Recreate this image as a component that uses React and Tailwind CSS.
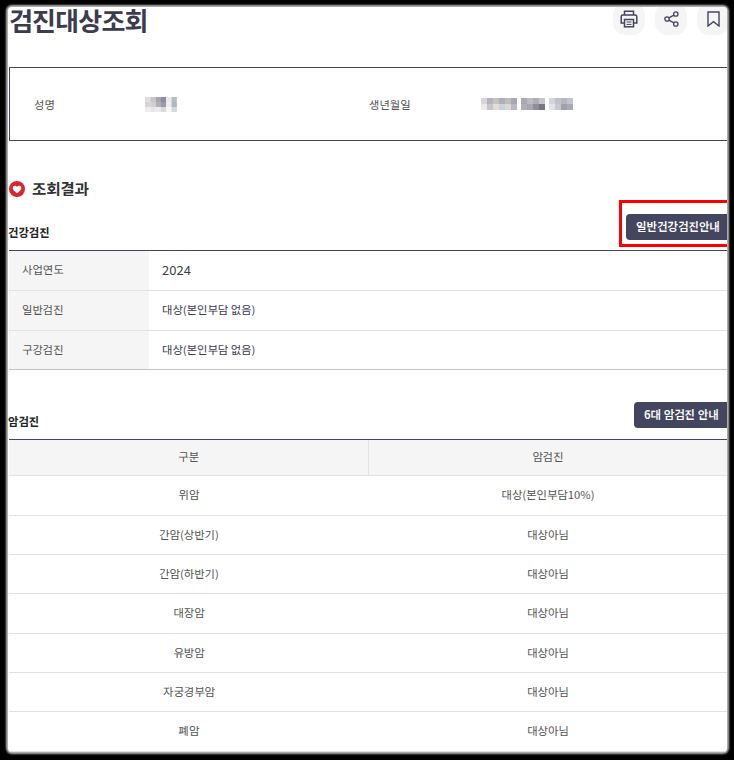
import React from 'react';

const FONT = "font-['Noto_Sans_KR','Noto_Sans_CJK_KR',sans-serif]";

const healthRows = [
  ['사업연도', '2024', 'h-[39px]'],
  ['일반검진', '대상(본인부담 없음)', 'h-10'],
  ['구강검진', '대상(본인부담 없음)', 'h-[39px]'],
];

const cancerRows = [
  ['위암', '대상(본인부담10%)', 'h-10'],
  ['간암(상반기)', '대상아님', 'h-[39px]'],
  ['간암(하반기)', '대상아님', 'h-[39px]'],
  ['대장암', '대상아님', 'h-10'],
  ['유방암', '대상아님', 'h-[39px]'],
  ['자궁경부암', '대상아님', 'h-[39px]'],
  ['폐암', '대상아님', 'h-10'],
];

const nameMosaic = [
  [0, 0, '#e3dfdc'], [1, 0, '#c9c6c8'], [2, 0, '#a9a6b0'], [3, 0, '#8d8da2'], [4, 0, '#e9e9ed'], [5, 0, '#b7bcc2'],
  [0, 1, '#d9d5d2'], [1, 1, '#d2d0d2'], [2, 1, '#b4b0b8'], [3, 1, '#9a9aaa'], [4, 1, '#eeeef0'], [5, 1, '#afb8bd'],
  [0, 2, '#efedeb'], [1, 2, '#e3e5ea'], [2, 2, '#eceaea'], [3, 2, '#d8d8de'], [4, 2, '#f6f6f6'], [5, 2, '#d4d8da'],
];

const birthTop = ['#d8d6da', '#b4b2ba', '#c4c2c6', '#aeb0b6', '#c0bcbc', '#a8a8b0', '#fff', '#aaa9b0', '#bdbcc0', '#b0aeb2', '#c6c6ca', '#fff', '#d2d6da', '#c0c2c8', '#b4b6c0', '#c2c4cc'];
const birthBottom = ['#ebe9e9', '#c7c5c9', '#e5dcd4', '#c5d4da', '#dad8d6', '#b8b8c0', '#fff', '#b0afb6', '#a9a8b0', '#8f8e96', '#77767e', '#fff', '#e0e4e8', '#c7c9d0', '#9fa1ad', '#a9abb6'];

// the gaps between the three blurred groups are narrower than one cell
const birthX = (i) => i * 6 - (i > 6 ? 2 : 0) - (i > 11 ? 2 : 0);

function Mosaic() {
  return (
    <svg width="32" height="15" viewBox="0 0 32 15" className="block">
      {nameMosaic.map(([x, y, c]) => (
        <rect key={`${x}-${y}`} x={x * 5.3} y={y * 5} width="5.4" height="5" fill={c} />
      ))}
    </svg>
  );
}

function BirthMosaic() {
  return (
    <svg width="94" height="12" viewBox="0 0 94 12" className="block">
      {birthTop.map((c, i) => <rect key={i} x={birthX(i)} y="0" width="6" height="6" fill={c} />)}
      {birthBottom.map((c, i) => <rect key={i} x={birthX(i)} y="6" width="6" height="6" fill={c} />)}
    </svg>
  );
}

function PrinterIcon() {
  return (
    <svg width="18" height="18" viewBox="0 0 18 18" fill="none" stroke="#44465f" strokeWidth="1.5">
      <path d="M4.5 5V1.2h9V5" />
      <path d="M4.5 13H1.2V6.6q0-1.6 1.6-1.6h12.4q1.6 0 1.6 1.6V13h-3.3" />
      <rect x="4.5" y="9.5" width="9" height="7.3" />
      <path d="M6.5 12h5M6.5 14.4h5" strokeWidth="1" />
    </svg>
  );
}

function ShareIcon() {
  return (
    <svg width="15" height="16" viewBox="0 0 15 16" fill="none" stroke="#44465f" strokeWidth="1.3">
      <circle cx="11.8" cy="3" r="2.2" />
      <circle cx="3" cy="8" r="2.2" />
      <circle cx="11.8" cy="13" r="2.2" />
      <path d="M4.9 6.9l5-2.8M4.9 9.1l5 2.8" />
    </svg>
  );
}

function BookmarkIcon() {
  return (
    <svg width="13" height="16" viewBox="0 0 13 16" fill="none" stroke="#44465f" strokeWidth="1.4">
      <path d="M1 1h11v14L6.5 10.6 1 15z" />
    </svg>
  );
}

function IconButton({ children }) {
  return (
    <div className="w-8 h-8 shrink-0 rounded-xl bg-[#f5f5f5] flex items-center justify-center">
      {children}
    </div>
  );
}

function GuideButton({ children, className }) {
  return (
    <div className={`h-[26px] rounded bg-[#44465f] text-white text-[11.4px] font-semibold flex items-center whitespace-nowrap ${className}`}>
      {children}
    </div>
  );
}

export default function App() {
  return (
    <div className={`w-[734px] h-[760px] bg-black overflow-hidden pt-[7px] pl-2 ${FONT}`}>
      <div className="relative w-[719px] h-[745px] bg-white rounded overflow-hidden shadow-[0_0_2px_2px_#b5b5b5]">
        {/* title row */}
        <div className="h-[60px] flex justify-between">
          <h1 className="pl-px text-[26px] leading-[26px] font-bold text-[#3b3c4e] tracking-[-0.8px]">검진대상조회</h1>
          <div className="flex gap-2.5 -mt-1 -mr-[2px]">
            <IconButton><PrinterIcon /></IconButton>
            <IconButton><ShareIcon /></IconButton>
            <IconButton><BookmarkIcon /></IconButton>
          </div>
        </div>

        {/* person info */}
        <div className="ml-px h-[74px] border border-r-0 border-[#44465f] flex items-center text-[11.3px] text-[#555]">
          <div className="w-[135px] pl-6">성명</div>
          <div className="w-[224px]"><Mosaic /></div>
          <div className="w-[112px]">생년월일</div>
          <BirthMosaic />
        </div>

        {/* result heading */}
        <div className="mt-[40px] h-4 flex items-center gap-[7px] pl-px">
          <svg width="16" height="16" viewBox="0 0 16 16">
            <circle cx="8" cy="8" r="8" fill="#d8262c" />
            <path d="M8 12.2C5.2 10.2 3.7 8.6 3.7 6.9 3.7 5.6 4.7 4.7 5.8 4.7c.9 0 1.7.5 2.2 1.3.5-.8 1.3-1.3 2.2-1.3 1.1 0 2.1.9 2.1 2.2 0 1.7-1.5 3.3-4.3 5.3z" fill="#fff" />
          </svg>
          <h2 className="text-[15.5px] font-bold text-[#333]">조회결과</h2>
        </div>

        {/* health check */}
        <div className="mt-[17px] h-[36px] flex justify-between items-end">
          <h3 className="text-[11.3px] font-bold text-[#222] pb-[10px] leading-4">건강검진</h3>
          <GuideButton className="w-[110px] -mr-[9px] pl-2.5 mb-[10px]">일반건강검진안내</GuideButton>
        </div>
        <div className="ml-px border-t border-[#44465f] border-b-[#c4c4c4] border-b text-[11.3px] text-[#555]">
          {healthRows.map(([label, value, height], i) => (
            <div key={label} className={`${height} flex items-center ${i > 0 ? 'border-t border-[#e2e2e6]' : ''}`}>
              <div className="w-[140px] h-full bg-[#f5f5f5] pl-[13px] pb-0.5 flex items-center">{label}</div>
              <div className={`pl-[13px] pb-0.5 text-[#3b3c4e] ${value === '2024' ? 'text-[13px]' : ''}`}>{value}</div>
            </div>
          ))}
        </div>

        {/* cancer check */}
        <div className="mt-[31px] h-[38px] flex justify-between items-end">
          <h3 className="text-[11.3px] font-bold text-[#222] pb-2.5 leading-4">암검진</h3>
          <GuideButton className="w-[102px] -mr-[9px] pl-2.5 mb-[11px]">6대 암검진 안내</GuideButton>
        </div>
        <div className="ml-px w-[718px] border-t border-[#44465f] text-[11.3px] text-[#555]">
          <div className="h-[36px] grid grid-cols-[360px_358px] bg-[#f5f5f5] text-center border-b border-[#e2e2e6]">
            <div className="flex items-center justify-center pb-0.5 border-r border-[#e2e2e6]">구분</div>
            <div className="flex items-center justify-center pb-0.5">암검진</div>
          </div>
          {cancerRows.map(([label, value, height]) => (
            <div key={label} className={`${height} grid grid-cols-[360px_358px] items-center text-center pb-0.5 border-b border-[#e2e2e6]`}>
              <div>{label}</div>
              <div>{value}</div>
            </div>
          ))}
        </div>

        {/* highlight box around the guide button */}
        <div className="absolute left-[611px] top-[193px] w-[120px] h-[47px] border-[3px] border-[#f00]" />
      </div>
    </div>
  );
}
